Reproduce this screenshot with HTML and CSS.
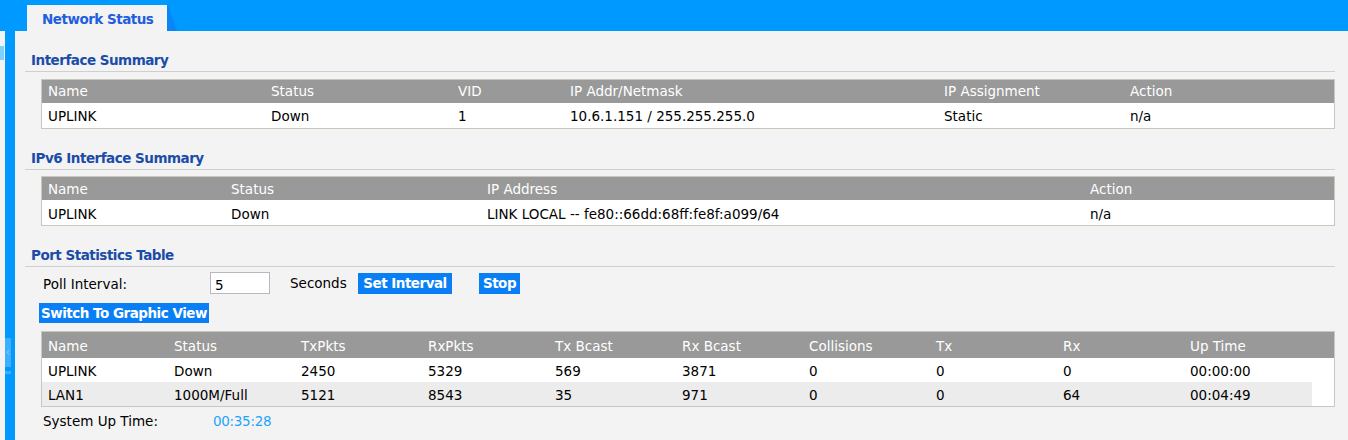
FILE: index.html
```html
<!DOCTYPE html>
<html lang="en">
<head>
    <meta charset="UTF-8">
    <title>Network Status</title>
    <link rel="stylesheet" href="styles.css">
</head>
<body>
    <div class="topbar">
        <div class="tab">Network Status</div>
        <div class="tab-edge"></div>
    </div>

    <div class="frame">
        <div class="gutter"><span class="gutter-mark"></span></div>
        <div class="rail">
            <span class="rail-handle">&#8249;</span>
            <span class="rail-tick"></span>
        </div>

        <div class="content">
            <h2 class="section-title">Interface Summary</h2>
            <div class="grid-table iface">
                <div class="row head">
                    <span>Name</span><span>Status</span><span>VID</span><span>IP Addr/Netmask</span><span>IP Assignment</span><span>Action</span>
                </div>
                <div class="row">
                    <span>UPLINK</span><span>Down</span><span>1</span><span>10.6.1.151 / 255.255.255.0</span><span>Static</span><span>n/a</span>
                </div>
            </div>

            <h2 class="section-title">IPv6 Interface Summary</h2>
            <div class="grid-table ipv6">
                <div class="row head">
                    <span>Name</span><span>Status</span><span>IP Address</span><span>Action</span>
                </div>
                <div class="row">
                    <span>UPLINK</span><span>Down</span><span>LINK LOCAL -- fe80::66dd:68ff:fe8f:a099/64</span><span>n/a</span>
                </div>
            </div>

            <h2 class="section-title">Port Statistics Table</h2>
            <div class="poll">
                <label class="poll-label" for="interval">Poll Interval:</label>
                <input class="poll-input" id="interval" type="text" value="5">
                <span class="poll-unit">Seconds</span>
                <button class="btn btn-set">Set Interval</button>
                <button class="btn btn-stop">Stop</button>
            </div>
            <div class="switch-row">
                <button class="btn btn-switch">Switch To Graphic View</button>
            </div>

            <div class="grid-table ports">
                <div class="row head">
                    <span>Name</span><span>Status</span><span>TxPkts</span><span>RxPkts</span><span>Tx Bcast</span><span>Rx Bcast</span><span>Collisions</span><span>Tx</span><span>Rx</span><span>Up Time</span>
                </div>
                <div class="row">
                    <span>UPLINK</span><span>Down</span><span>2450</span><span>5329</span><span>569</span><span>3871</span><span>0</span><span>0</span><span>0</span><span>00:00:00</span>
                </div>
                <div class="row alt">
                    <span>LAN1</span><span>1000M/Full</span><span>5121</span><span>8543</span><span>35</span><span>971</span><span>0</span><span>0</span><span>64</span><span>00:04:49</span>
                </div>
            </div>

            <div class="uptime">
                <span class="uptime-label">System Up Time:</span>
                <span class="uptime-value">00:35:28</span>
            </div>
        </div>
    </div>
</body>
</html>
```

FILE: styles.css
```css
html, body {
    margin: 0;
    padding: 0;
}
body {
    font-family: "DejaVu Sans", Verdana, sans-serif;
    font-size: 13.5px;
    color: #000;
    background-color: #f3f3f3;
    width: 1348px;
    height: 440px;
    overflow: hidden;
}

/* top bar with the single tab */
.topbar {
    height: 31px;
    background-color: #0099ff;
    display: flex;
    align-items: flex-end;
    padding-left: 27px;
}
.tab {
    width: 140px;
    height: 26px;
    box-sizing: border-box;
    padding-left: 15px;
    line-height: 28px;
    background-color: #f3f3f3;
    color: #1f5ede;
    font-weight: bold;
    letter-spacing: -0.5px;
}
.tab-edge {
    width: 10px;
    height: 26px;
    background-color: #0a85f7;
    clip-path: polygon(0 0, 10% 0, 100% 100%, 0 100%);
}

/* left rail */
.frame {
    display: flex;
    height: 409px;
}
.gutter {
    width: 5px;
    flex: none;
    position: relative;
}
.gutter-mark {
    position: absolute;
    left: 0;
    top: 15px;
    width: 4px;
    height: 14px;
    background-color: #7fd0ff;
}
.rail {
    width: 10px;
    flex: none;
    background-color: #0099ff;
    position: relative;
}
.rail-handle {
    position: absolute;
    left: 0;
    top: 307px;
    width: 6px;
    height: 29px;
    background-color: #3cb0ff;
    color: #79c9ff;
    font-size: 12px;
    line-height: 29px;
    text-align: center;
}
.rail-tick {
    position: absolute;
    left: 0;
    top: 340px;
    width: 6px;
    height: 3px;
    background-color: #3cb0ff;
}

.content {
    flex: 1;
    padding: 20px 14px 0 10px;
}

.section-title {
    margin: 20px 0 0 0;
    padding-left: 6px;
    height: 20px;
    line-height: 19px;
    font-size: 13.5px;
    font-weight: bold;
    letter-spacing: -0.5px;
    color: #1b4ca8;
    border-bottom: 1px solid #cfcfcf;
}
.section-title:first-child {
    margin-top: 0;
}

/* tables */
.grid-table {
    margin: 7px 0 0 16px;
    border: 1px solid #c8c8bd;
    background-color: #fff;
}
.ipv6 {
    margin-top: 6px;
}
.row {
    display: grid;
    height: 25px;
    line-height: 27px;
    margin-right: 22px;
}
.row span {
    padding-left: 6px;
    white-space: nowrap;
}
.row.head {
    height: 23px;
    line-height: 22px;
    margin-right: 0;
    padding-right: 22px;
    background-color: #999999;
    color: #fff;
}
.row.alt {
    background-color: #ececec;
}
.iface .row {
    grid-template-columns: 223px 187px 112px 374px 186px 188px;
}
.ipv6 .row {
    grid-template-columns: 183px 256px 603px 228px;
    line-height: 28px;
}
.ipv6 .row.head {
    line-height: 24px;
}
.ports .row {
    grid-template-columns: 126px repeat(8, 127px) 128px;
    height: 24px;
    line-height: 26px;
}
.ports .row.head {
    height: 26px;
    line-height: 28px;
}

/* poll interval controls */
.poll {
    display: flex;
    align-items: center;
    margin: 5px 0 0 18px;
    height: 22px;
}
.poll-label {
    width: 167px;
    margin-top: 2px;
}
.poll-input {
    width: 60px;
    height: 22px;
    box-sizing: border-box;
    border: 1px solid #b5b9c2;
    padding: 3px 0 0 4px;
    font-family: inherit;
    font-size: 13.5px;
    background-color: #fff;
}
.poll-unit {
    margin-left: 20px;
    width: 68px;
}
.btn {
    font-family: inherit;
    font-size: 13.5px;
    font-weight: bold;
    letter-spacing: -0.5px;
    white-space: nowrap;
    color: #fff;
    background-color: #0a7ff5;
    border: none;
    padding: 0;
    height: 21px;
    line-height: 21px;
}
.btn-set {
    width: 94px;
}
.btn-stop {
    width: 41px;
    margin-left: 27px;
}
.switch-row {
    display: flex;
    margin: 9px 0 0 14px;
}
.btn-switch {
    padding: 0 2px;
    height: 20px;
    line-height: 20px;
}
.ports {
    margin-top: 8px;
}

.uptime {
    display: flex;
    margin: 2px 0 0 18px;
    height: 24px;
    line-height: 24px;
}
.uptime-label {
    width: 170px;
}
.uptime-value {
    color: #1ea3ff;
    letter-spacing: -0.3px;
}
```
